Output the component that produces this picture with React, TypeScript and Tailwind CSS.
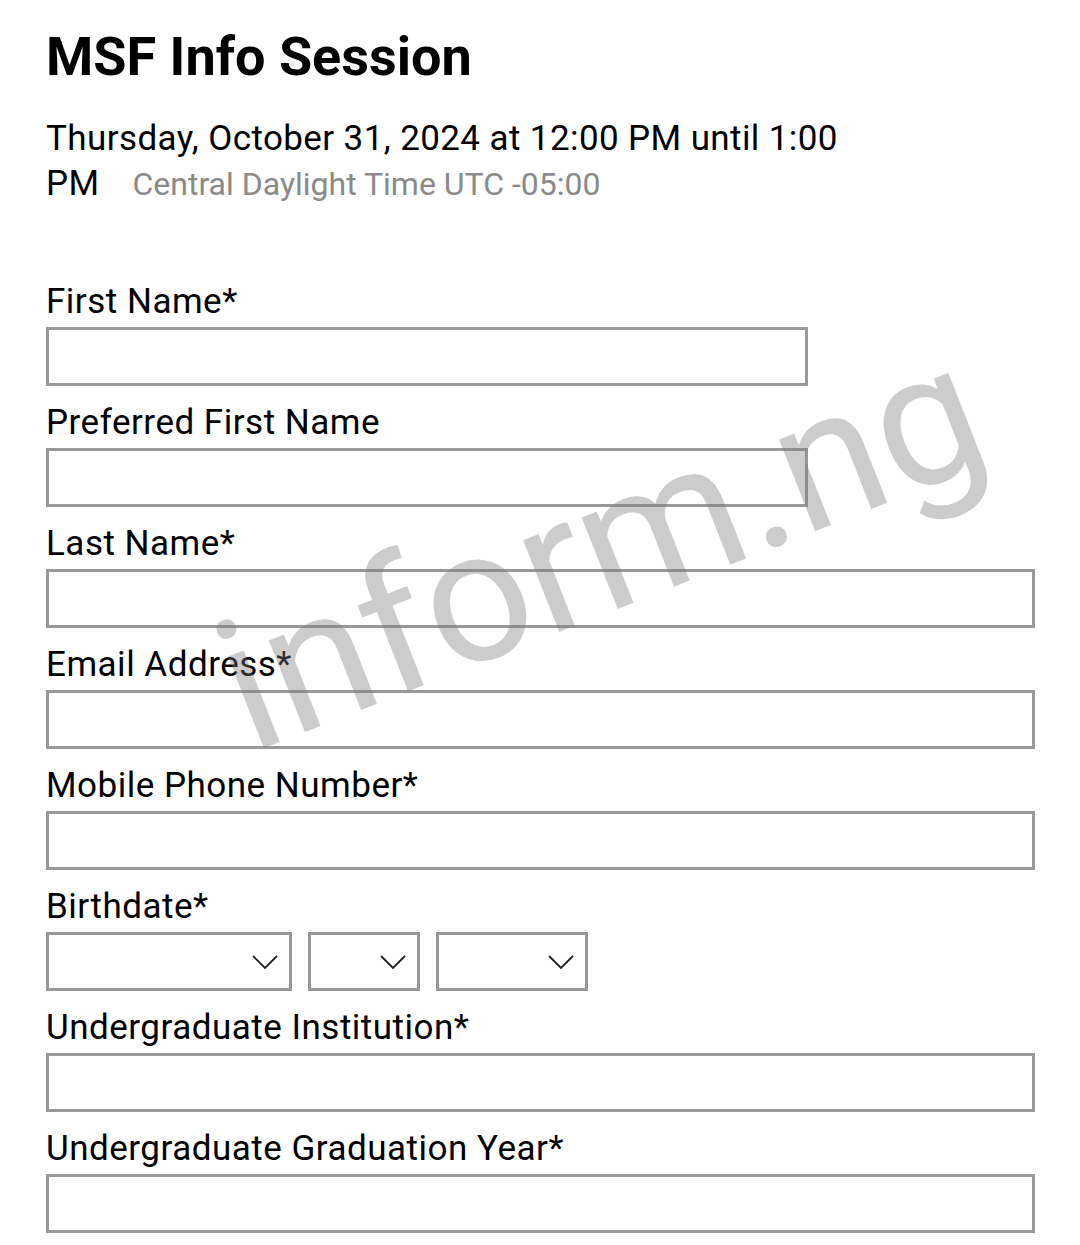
import React from 'react'

type Field = {
  label: string
  narrow?: boolean
}

const fields: Field[] = [
  { label: 'First Name*', narrow: true },
  { label: 'Preferred First Name', narrow: true },
  { label: 'Last Name*' },
  { label: 'Email Address*' },
  { label: 'Mobile Phone Number*' }
]

const lowerFields: Field[] = [
  { label: 'Undergraduate Institution*' },
  { label: 'Undergraduate Graduation Year*' }
]

const Chevron: React.FC = () => (
  <svg
    width="26"
    height="14"
    viewBox="0 0 26 14"
    fill="none"
    stroke="#222"
    strokeWidth="1.8"
    className="pointer-events-none absolute right-[11px] top-1/2 -translate-y-1/2"
  >
    <polyline points="1,1 13,13 25,1" />
  </svg>
)

const Label: React.FC<{ text: string }> = ({ text }) => (
  <label className="block h-[40px] text-[35px] leading-[42px] tracking-[0.5px] text-black">
    {text}
  </label>
)

const TextField: React.FC<Field> = ({ label, narrow }) => (
  <div>
    <Label text={label} />
    <input
      type="text"
      className={
        narrow
          ? 'mt-[6px] block h-[59px] w-[762px] border-[3px] border-[#999] bg-white outline-none'
          : 'mt-[6px] block h-[59px] w-[989px] border-[3px] border-[#999] bg-white outline-none'
      }
    />
  </div>
)

const App: React.FC = () => {
  return (
    <div
      className="relative min-h-[1245px] overflow-hidden bg-white pl-[46px] pt-[25px]"
      style={{ fontFamily: 'Roboto, "Noto Sans", sans-serif' }}
    >
      {/* Header */}
      <h1 className="text-[54px] font-bold leading-[64px] text-black">
        MSF Info Session
      </h1>
      <p className="mt-[27px] w-[830px] text-[35px] leading-[45px] tracking-[0.4px] text-black">
        Thursday, October 31, 2024 at 12:00 PM until 1:00 PM
        <span className="ml-[33px] text-[32px] tracking-normal text-[#8a8a8a]">
          Central Daylight Time UTC -05:00
        </span>
      </p>

      {/* Form */}
      <form className="mt-[74px] flex flex-col gap-[16px]">
        {fields.map((f) => (
          <TextField key={f.label} {...f} />
        ))}

        <div>
          <Label text="Birthdate*" />
          <div className="mt-[6px] flex gap-[16px]">
            <div className="relative h-[59px] w-[246px] border-[3px] border-[#999]">
              <Chevron />
            </div>
            <div className="relative h-[59px] w-[112px] border-[3px] border-[#999]">
              <Chevron />
            </div>
            <div className="relative h-[59px] w-[152px] border-[3px] border-[#999]">
              <Chevron />
            </div>
          </div>
        </div>

        {lowerFields.map((f) => (
          <TextField key={f.label} {...f} />
        ))}
      </form>

      {/* Watermark */}
      <div className="pointer-events-none absolute left-[600px] top-[547px] -translate-x-1/2 -translate-y-1/2 -rotate-[21.5deg] whitespace-nowrap text-[186px] leading-none text-[rgba(120,120,120,0.38)]">
        inform.ng
      </div>
    </div>
  )
}

export default App
